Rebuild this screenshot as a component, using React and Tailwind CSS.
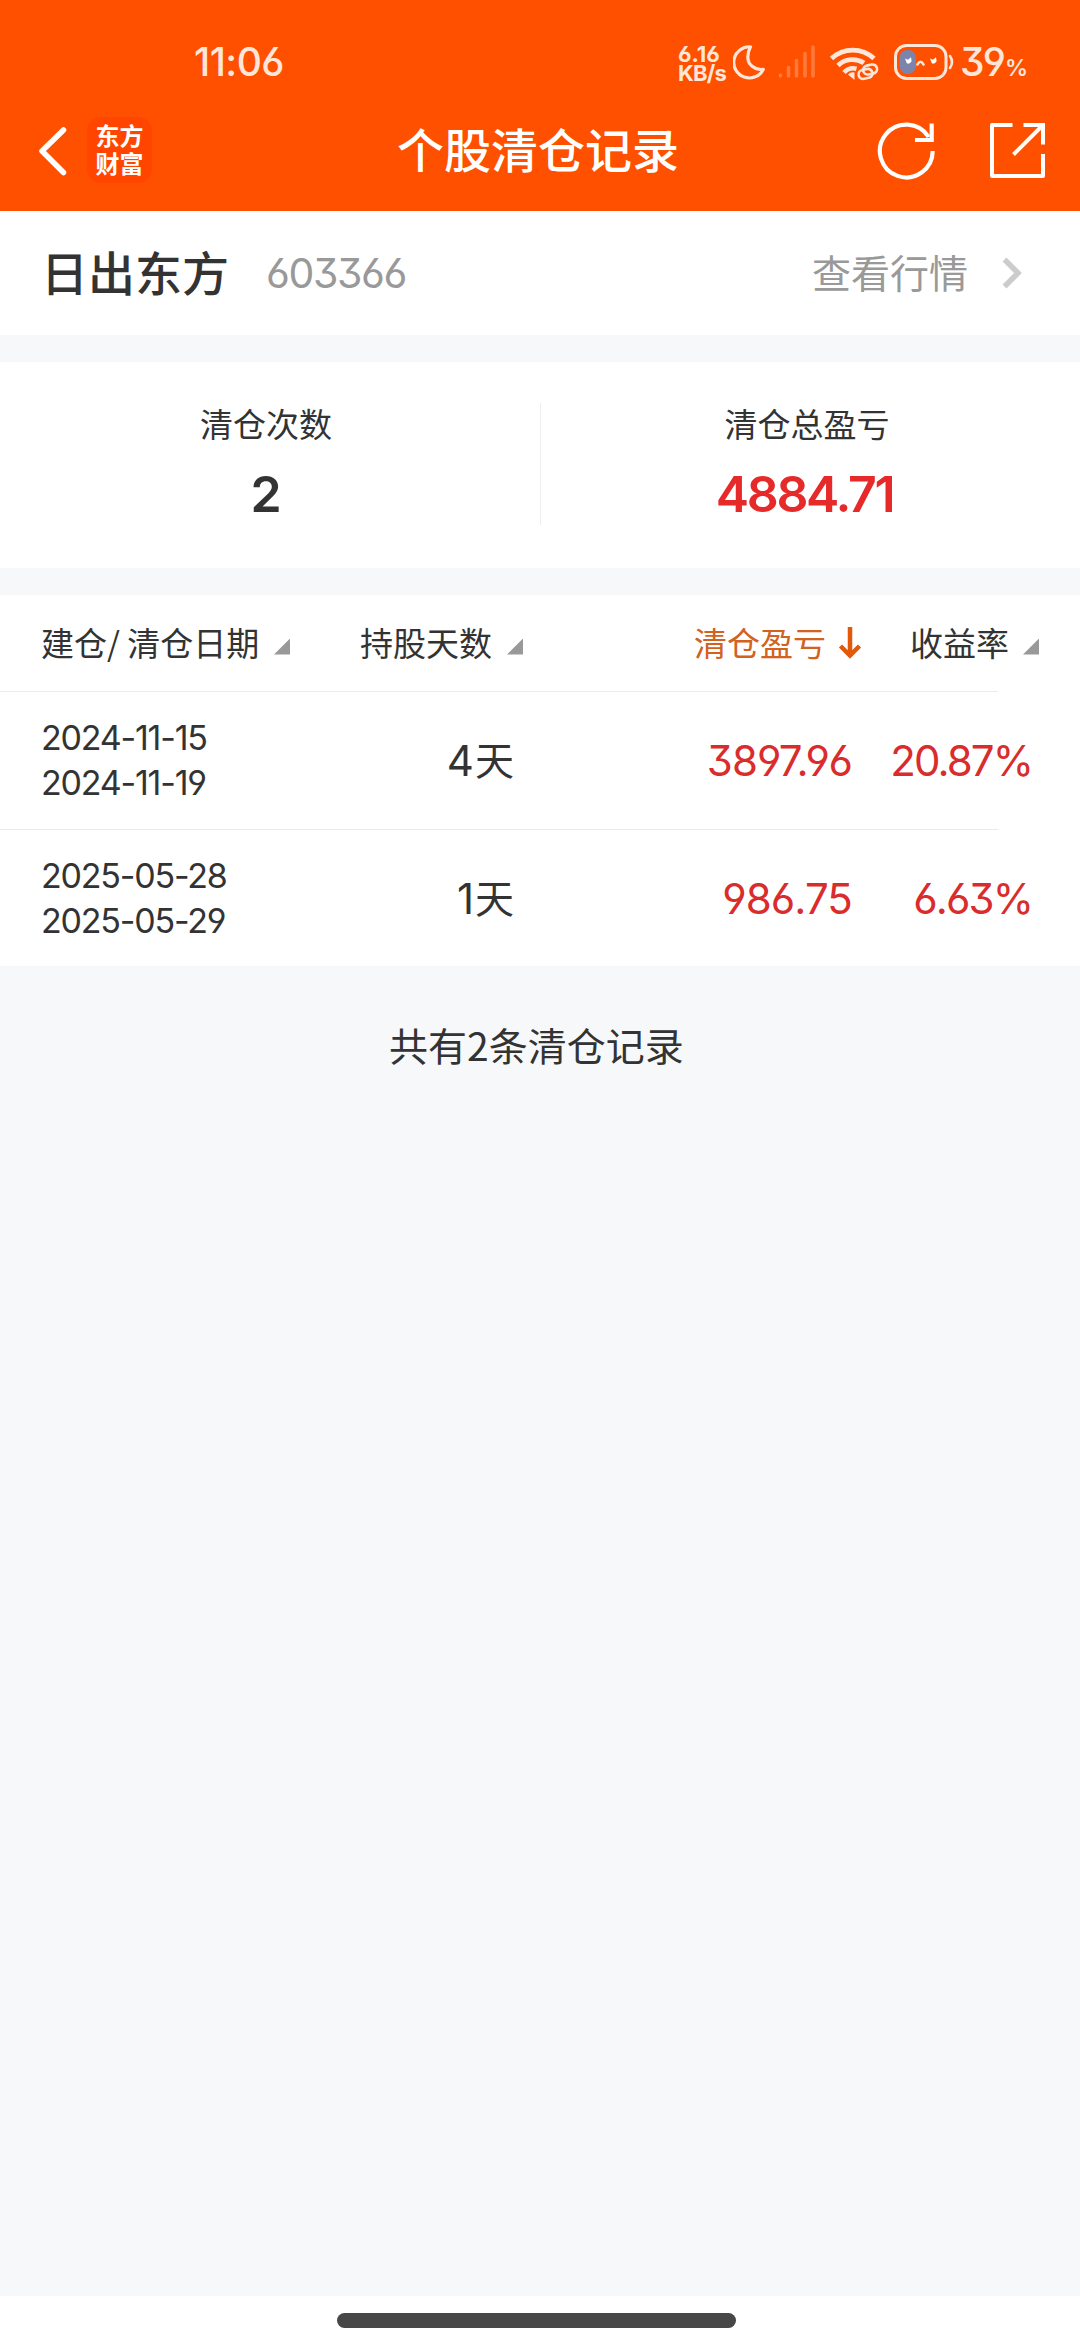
const CJK = "font-['Noto_Sans_CJK_SC',sans-serif]";
const NUM =
  "font-['Inter','Noto_Sans_CJK_SC',sans-serif] [font-feature-settings:'cv03','cv04','cv09'] whitespace-nowrap";

const rows = [
  { open: '2024-11-15', close: '2024-11-19', days: '4', profit: '3897.96', rate: '20.87%' },
  { open: '2025-05-28', close: '2025-05-29', days: '1', profit: '986.75', rate: '6.63%' },
];

function StatusBar() {
  return (
    <div className="flex h-[91px] items-start text-[#ffe6d8]">
      <div className={`${NUM} ml-[194px] mt-[42px] w-[484px] text-[39px] font-medium leading-[40px] tracking-[-0.5px]`}>11:06</div>
      <div className={`${NUM} mt-[45px] w-[55px] text-[22px] font-bold leading-[18.500px]`}>
        <div>6.16</div>
        <div className="tracking-[-0.8px]">KB/s</div>
      </div>
      <svg className="mt-[42px] h-[40px] w-[33px]" viewBox="733 42 33 40" fill="none" stroke="currentColor" strokeWidth="3.200" strokeLinejoin="round">
        <path d="M750.5 46.8a15.6 15.6 0 1 0 12.8 22.6c-9 1-15.500-5-15.500-12.400 0-4 1-7 2.700-10.200Z" />
      </svg>
      <svg className="ml-[11px] mt-[42px] h-[40px] w-[39px]" viewBox="777 42 39 40" stroke="#ff7b3c" strokeWidth="3.600" strokeLinecap="round">
        <path d="M780.5 75v1M788.500 67.500V76M796.500 60.500V76M805 53.500V76M813 47V76" />
      </svg>
      <svg className="ml-[12px] mt-[42px] h-[40px] w-[54px]" viewBox="828 42 54 40" fill="none" stroke="currentColor">
        <path strokeWidth="4.800" d="M831.500 58.500a31 31 0 0 1 42.500 0" />
        <path strokeWidth="4.800" d="M838 65.500a21 21 0 0 1 26-2.500" />
        <path strokeWidth="4.600" d="M844 72.500a13 13 0 0 1 12.500-3.800" />
        <path fill="currentColor" stroke="none" d="M848 74.500q3-3 6.500-2v7.500Z" />
        <g stroke="#ff5000" strokeWidth="6">
          <rect x="863" y="65" width="14" height="9" rx="4.500" transform="rotate(-12 870 69)" />
          <rect x="858.500" y="69.500" width="14" height="9" rx="4.500" transform="rotate(-12 865 74)" />
        </g>
        <g strokeWidth="2.600">
          <rect x="863" y="65" width="14" height="9" rx="4.500" transform="rotate(-12 870 69)" />
          <rect x="858.500" y="69.500" width="14" height="9" rx="4.500" transform="rotate(-12 865 74)" />
        </g>
      </svg>
      <svg className="ml-[10px] mt-[42px] h-[40px] w-[64px]" viewBox="892 42 64 40" fill="none" stroke="currentColor" strokeWidth="3">
        <rect x="895.500" y="45.500" width="50.500" height="33" rx="11" />
        <rect x="899.500" y="50" width="16.500" height="24" rx="8" fill="#7d84ab" stroke="none" />
        <path strokeWidth="2.600" strokeLinecap="round" d="M950 56q4 6 0 12M917.500 64.500q3-5.500 6 0" />
        <path fill="#fff" stroke="none" d="M905 58.500l3 1.200 3-2.500 .6 4q-2 3.500-4.800 2Z M930 58.500l3 1.200 3-2.500 .6 4q-2 3.500-4.800 2Z" />
      </svg>
      <div className={`${NUM} ml-[4px] mt-[42px] text-[39px] font-medium leading-[40px] tracking-[-1.800px]`}>
        39<span className="ml-[1px] text-[23px] font-semibold">%</span>
      </div>
    </div>
  );
}

function TitleBar() {
  return (
    <div className="flex h-[120px] items-start text-white">
      <svg className="ml-[36px] mt-[34px] h-[52px] w-[32px]" viewBox="36 125 32 52" fill="none" stroke="currentColor" strokeWidth="5.500" strokeLinecap="round" strokeLinejoin="round">
        <path d="M63.500 130 42 151l21.500 21.500" />
      </svg>
      <div className={`${CJK} ml-[19px] mt-[26px] flex h-[66px] w-[65px] flex-col items-center rounded-[14px] bg-[#ff4500] pt-[4px] text-[24px] font-bold leading-[27.500px]`}>
        <div>东方</div>
        <div>财富</div>
      </div>
      <h1 className={`${CJK} ml-[245px] mt-[27px] w-[477px] text-[47px] font-medium leading-[60px]`}>个股清仓记录</h1>
      <svg className="mt-[29px] h-[62px] w-[64px]" viewBox="874 120 64 62" fill="none" stroke="currentColor" strokeWidth="4.200">
        <path d="M932.700 151a26.400 26.400 0 1 1-4-14" />
        <path d="M931.700 123.500V140H915" />
      </svg>
      <svg className="ml-[48px] mt-[29px] h-[62px] w-[64px]" viewBox="986 120 64 62" fill="none" stroke="currentColor" strokeWidth="4">
        <path strokeLinejoin="round" d="M1012.500 125H992v51h51v-22" />
        <path d="M1023.500 125H1043v19.500M1013.500 154.500 1043 125" />
      </svg>
    </div>
  );
}

function SortMark() {
  return <span className="mt-[7px] h-4 w-4 bg-[#999] [clip-path:polygon(100%_0,100%_100%,0_100%)]" />;
}

function HeaderCell({ className, children }) {
  return (
    <div className={`${CJK} flex items-center whitespace-nowrap text-[33px] leading-[50px] ${className}`}>
      {children}
    </div>
  );
}

function Row({ row }) {
  return (
    <div className="flex h-[137px] items-center">
      <div className={`${NUM} ml-[41px] w-[300px] pb-px text-[34px] leading-[45px] tracking-[-1.200px]`}>
        <div>{row.open}</div>
        <div>{row.close}</div>
      </div>
      <div className="flex w-[173px] items-center justify-end text-[39px] leading-[50px]">
        <span className={`${NUM} mr-[1px] text-[42px]`}>{row.days}</span>
        <span className={`${CJK} mb-[6px]`}>天</span>
      </div>
      <div className={`${NUM} w-[338px] text-right text-[42px] leading-[50px] tracking-[-0.9px] text-[#d92d2d]`}>{row.profit}</div>
      <div className={`${NUM} w-[180px] text-right text-[42px] leading-[50px] tracking-[-1.9px] text-[#d92d2d]`}>{row.rate}</div>
    </div>
  );
}

export default function App() {
  return (
    <div className="flex h-[2340px] w-[1080px] flex-col overflow-hidden bg-[#f7f8fa] text-[#333]">
      <header className="h-[211px] bg-[#ff5000]">
        <StatusBar />
        <TitleBar />
      </header>

      <section className="flex h-[124px] items-center bg-white">
        <div className={`${CJK} mb-[5px] ml-[41px] w-[225px] text-[47px] font-medium leading-[60px]`}>日出东方</div>
        <div className={`${NUM} w-[546px] text-[41px] leading-[60px] tracking-[-1.400px] text-[#999]`}>603366</div>
        <div className={`${CJK} mb-[5px] w-[189px] text-[39px] leading-[60px] text-[#999]`}>查看行情</div>
        <svg className="h-[34px] w-[24px]" viewBox="0 0 24 34" fill="none" stroke="#ccc" strokeWidth="5.500">
          <path d="M3.500 3.500 17 17 3.500 30.500" />
        </svg>
      </section>

      <section className="mt-[27px] flex h-[206px] items-start bg-white">
        <div className="flex w-[540px] flex-col items-center pr-[8px] pt-[36px]">
          <div className={`${CJK} text-[33px] leading-[50px]`}>清仓次数</div>
          <div className={`${NUM} mt-[16px] text-[50px] font-semibold leading-[60px]`}>2</div>
        </div>
        <div className="mt-[41px] h-[122px] w-px bg-[#eee]" />
        <div className="flex w-[539px] flex-col items-center pr-[7px] pt-[36px]">
          <div className={`${CJK} text-[33px] leading-[50px]`}>清仓总盈亏</div>
          <div className={`${NUM} mr-[5px] mt-[16px] text-[50px] font-semibold leading-[60px] tracking-[-2.300px] text-[#e62a2a]`}>4884.71</div>
        </div>
      </section>

      <section className="mt-[27px] h-[371px] bg-white">
        <div className="flex h-[96px] items-center">
          <HeaderCell className="ml-[41px] w-[319px]">
            <span className="mb-[3px] w-[233px]">建仓/ 清仓日期</span>
            <SortMark />
          </HeaderCell>
          <HeaderCell className="w-[334px]">
            <span className="mb-[3px] w-[147px]">持股天数</span>
            <SortMark />
          </HeaderCell>
          <HeaderCell className="w-[216px] text-[#d2621e]">
            <span className="mb-[3px] w-[144px]">清仓盈亏</span>
            <svg className="h-[34px] w-[24px]" viewBox="838 626 24 34" fill="none" stroke="#e4580a" strokeWidth="4.500">
              <path d="M850 627v29M840.500 646l9.500 9.500 9.500-9.500" />
            </svg>
          </HeaderCell>
          <HeaderCell className="w-[170px]">
            <span className="mb-[3px] w-[113px]">收益率</span>
            <SortMark />
          </HeaderCell>
        </div>
        <div className="h-px w-[998px] bg-[#ebebeb]" />
        <Row row={rows[0]} />
        <div className="h-px w-[998px] bg-[#ebebeb]" />
        <Row row={rows[1]} />
      </section>

      <p className={`${CJK} ml-[389px] mt-[48px] text-[39px] leading-[60px]`}>共有2条清仓记录</p>

      <footer className="mt-auto flex h-[44px] items-start justify-center bg-white pr-[7px] pt-[17px]">
        <div className="h-[15px] w-[399px] rounded-full bg-[#474747]" />
      </footer>
    </div>
  );
}
